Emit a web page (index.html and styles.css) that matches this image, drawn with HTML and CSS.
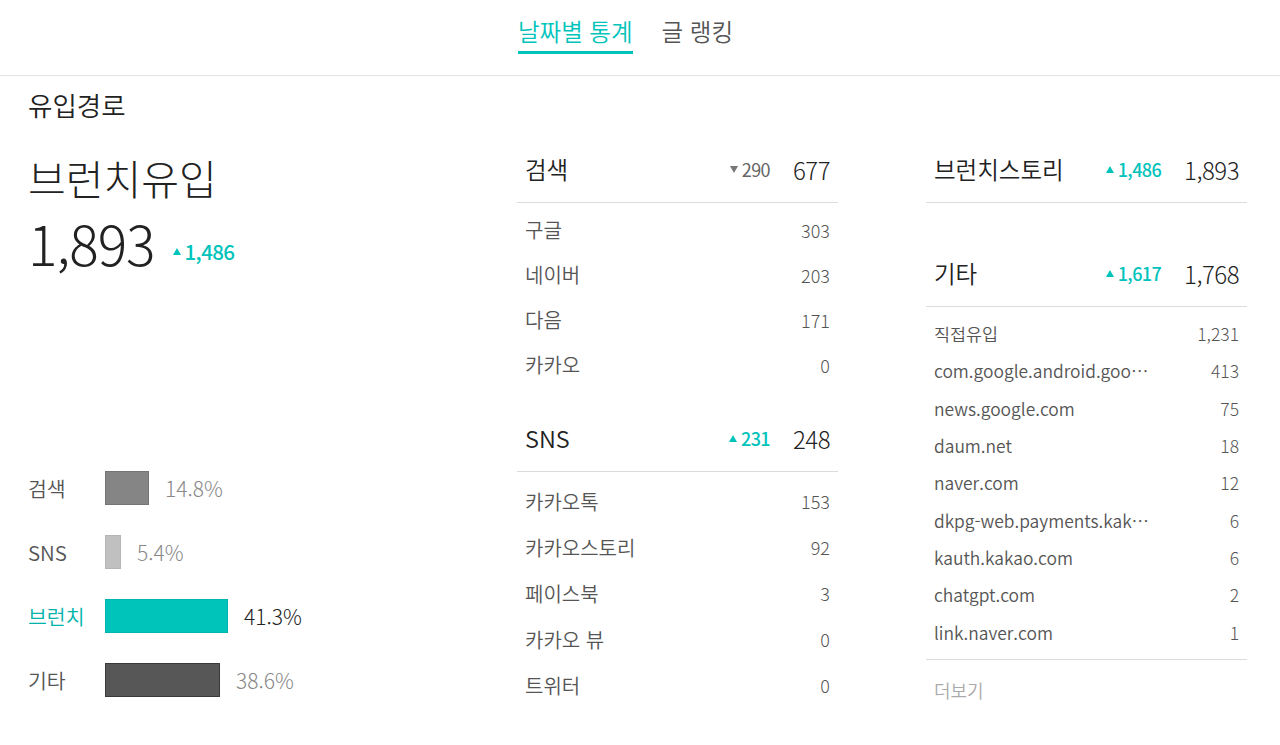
FILE: index.html
```html
<!DOCTYPE html>
<html lang="ko">
<head>
<meta charset="utf-8">
<title>유입경로</title>
<link rel="stylesheet" href="styles.css">
</head>
<body>
<header class="topbar">
  <nav class="tabs">
    <a class="tab active">날짜별 통계</a>
    <a class="tab">글 랭킹</a>
  </nav>
</header>
<main class="page">
  <h2 class="title">유입경로</h2>
  <div class="columns">
    <section class="col-left">
      <div class="summary-label">브런치유입</div>
      <div class="summary-value"><span class="big">1,893</span><span class="delta up">1,486</span></div>
      <div class="chart">
        <div class="chart-row"><span class="chart-label">검색</span><span class="bar bar-search" style="width:44px"></span><span class="pct">14.8%</span></div>
        <div class="chart-row"><span class="chart-label">SNS</span><span class="bar bar-sns" style="width:16px"></span><span class="pct">5.4%</span></div>
        <div class="chart-row"><span class="chart-label brunch">브런치</span><span class="bar bar-brunch" style="width:123px"></span><span class="pct pct-dark">41.3%</span></div>
        <div class="chart-row"><span class="chart-label">기타</span><span class="bar bar-etc" style="width:115px"></span><span class="pct">38.6%</span></div>
      </div>
    </section>
    <section class="col-mid">
      <div class="group-head"><span class="group-name">검색</span><span class="delta down">290</span><span class="group-total">677</span></div>
      <ul class="list list-mid">
        <li><span>구글</span><span class="num">303</span></li>
        <li><span>네이버</span><span class="num">203</span></li>
        <li><span>다음</span><span class="num">171</span></li>
        <li><span>카카오</span><span class="num">0</span></li>
      </ul>
      <div class="group-head group-sns"><span class="group-name">SNS</span><span class="delta up">231</span><span class="group-total">248</span></div>
      <ul class="list list-mid list-sns">
        <li><span>카카오톡</span><span class="num">153</span></li>
        <li><span>카카오스토리</span><span class="num">92</span></li>
        <li><span>페이스북</span><span class="num">3</span></li>
        <li><span>카카오 뷰</span><span class="num">0</span></li>
        <li><span>트위터</span><span class="num">0</span></li>
      </ul>
    </section>
    <section class="col-right">
      <div class="group-head"><span class="group-name">브런치스토리</span><span class="delta up">1,486</span><span class="group-total">1,893</span></div>
      <div class="group-head group-etc"><span class="group-name">기타</span><span class="delta up">1,617</span><span class="group-total">1,768</span></div>
      <ul class="list list-right">
        <li><span class="lbl">직접유입</span><span class="num">1,231</span></li>
        <li><span class="lbl">com.google.android.googlequicksearchbox</span><span class="num">413</span></li>
        <li><span class="lbl">news.google.com</span><span class="num">75</span></li>
        <li><span class="lbl">daum.net</span><span class="num">18</span></li>
        <li><span class="lbl">naver.com</span><span class="num">12</span></li>
        <li><span class="lbl">dkpg-web.payments.kakao.com</span><span class="num">6</span></li>
        <li><span class="lbl">kauth.kakao.com</span><span class="num">6</span></li>
        <li><span class="lbl">chatgpt.com</span><span class="num">2</span></li>
        <li><span class="lbl">link.naver.com</span><span class="num">1</span></li>
      </ul>
      <div class="more">더보기</div>
    </section>
  </div>
</main>
</body>
</html>
```
FILE: styles.css
```css
* { box-sizing: border-box; }
html, body { margin: 0; padding: 0; background: #fff; }
body {
  font-family: "Noto Sans CJK KR", "Noto Sans", sans-serif;
  font-weight: 350;
  color: #333;
  width: 1280px;
  height: 745px;
  overflow: hidden;
}
ul { list-style: none; margin: 0; padding: 0; }

.topbar {
  height: 76px;
  border-bottom: 1px solid #e2e2e2;
  display: flex;
  justify-content: center;
  padding-right: 29px;
}
.tabs { display: flex; gap: 29px; }
.tab {
  font-size: 23.5px;
  line-height: 32px;
  padding-top: 15px;
  height: 54px;
  color: #555;
  border-bottom: 3px solid transparent;
}
.tab.active { color: #00c3bb; border-bottom-color: #00c3bb; }

.page { padding: 0 33px 0 28px; }
.title {
  margin: 0;
  padding-top: 13px;
  font-size: 26.5px;
  line-height: 32px;
  font-weight: 350;
  color: #222;
}
.columns { display: flex; }
.col-left { width: 489px; padding-top: 32px; }
.col-mid { width: 321px; margin-right: 88px; padding-top: 19px; }
.col-right { width: 321px; padding-top: 19px; }

.summary-label {
  font-size: 41px;
  line-height: 48px;
  font-weight: 300;
  color: #222;
}
.summary-value {
  margin-top: 9px;
  display: flex;
  align-items: center;
  height: 64px;
}
.big {
  font-size: 55px;
  line-height: 64px;
  font-weight: 300;
  color: #222;
  letter-spacing: -1px;
}
.summary-value .delta { margin-left: 18px; margin-top: 18px; font-size: 20.5px; }

.delta {
  display: inline-flex;
  align-items: center;
  font-size: 18px;
  letter-spacing: -0.6px;
  font-weight: 500;
}
.delta::before {
  content: "";
  display: inline-block;
  width: 0; height: 0;
  border-left: 4px solid transparent;
  border-right: 4px solid transparent;
  margin-right: 4px;
}
.delta.up { color: #00c3bb; }
.delta.up::before { border-bottom: 7px solid #00c3bb; }
.delta.down { color: #666; font-weight: 400; }
.delta.down::before { border-top: 7px solid #777; }

.chart { margin-top: 182px; }
.chart-row { height: 64px; display: flex; align-items: center; }
.chart-label { width: 77px; font-size: 20.5px; color: #555; }
.chart-label.brunch { color: #00b3ab; }
.bar { height: 34px; border: 1px solid; }
.bar-search { background: #858585; border-color: #747474; }
.bar-sns { background: #c0c0c0; border-color: #b5b5b5; }
.bar-brunch { background: #00c3b9; border-color: #00b5ab; }
.bar-etc { background: #575757; border-color: #3a3a3a; }
.pct { margin-left: 16px; font-size: 21px; font-weight: 300; color: #888; }
.pct-dark { color: #222; }

.group-head {
  height: 63px;
  border-bottom: 1px solid #dcdcdc;
  display: flex;
  align-items: center;
  padding: 0 8px 4px;
}
.group-name { flex: 1; font-size: 23.5px; color: #222; }
.group-total {
  margin-left: 23px;
  font-size: 24px;
  font-weight: 300;
  color: #222;
  letter-spacing: -0.5px;
}
.group-sns { margin-top: 22px; }
.group-etc { margin-top: 41px; }

.list li {
  display: flex;
  justify-content: space-between;
  align-items: center;
  padding: 0 8px;
  color: #555;
}
.list-mid { padding-top: 4px; }
.list-mid li { height: 45px; font-size: 20px; }
.list-sns { padding-top: 6px; }
.list-sns li { height: 46px; }
.num { font-weight: 300; color: #555; font-size: 17.5px; }
.list-mid .num { font-size: 18px; }

.list-right { padding-top: 8px; padding-bottom: 8px; border-bottom: 1px solid #dcdcdc; }
.list-right li { height: 37.3px; font-size: 17.4px; }
.lbl {
  max-width: 220px;
  white-space: nowrap;
  overflow: hidden;
  text-overflow: ellipsis;
}
.more { padding: 16px 8px 0; font-size: 18px; line-height: 28px; color: #aaa; }
```
